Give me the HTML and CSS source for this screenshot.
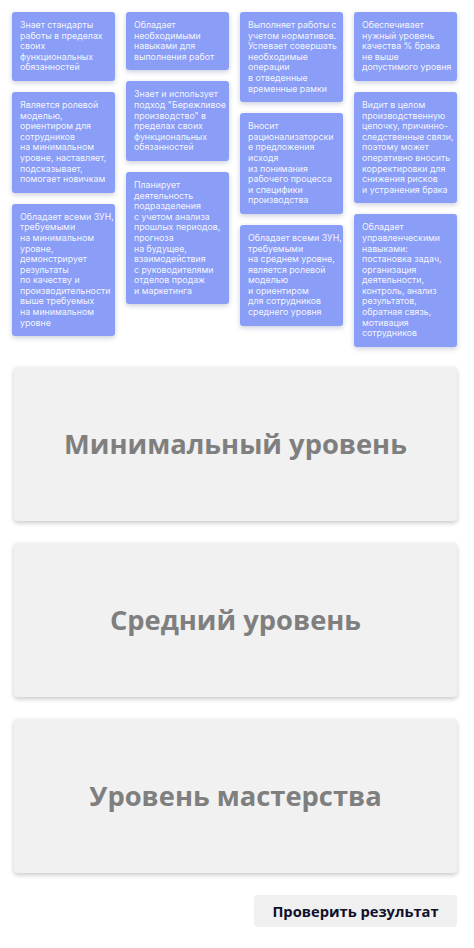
FILE: index.html
```html
<!DOCTYPE html>
<html lang="ru">
<head>
<meta charset="utf-8">
<title>Уровни</title>
<link rel="stylesheet" href="styles.css">
</head>
<body>
<div class="page">
  <div class="cards">
    <div class="col">
      <div class="card">Знает стандарты<br>работы в пределах<br>своих<br>функциональных<br>обязанностей</div>
      <div class="card">Является ролевой<br>моделью,<br>ориентиром для<br>сотрудников<br>на минимальном<br>уровне, наставляет,<br>подсказывает,<br>помогает новичкам</div>
      <div class="card">Обладает всеми ЗУН,<br>требуемыми<br>на минимальном<br>уровне,<br>демонстрирует<br>результаты<br>по качеству и<br>производительности<br>выше требуемых<br>на минимальном<br>уровне</div>
    </div>
    <div class="col">
      <div class="card">Обладает<br>необходимыми<br>навыками для<br>выполнения работ</div>
      <div class="card">Знает и использует<br>подход "Бережливое<br>производство" в<br>пределах своих<br>функциональных<br>обязанностей</div>
      <div class="card">Планирует<br>деятельность<br>подразделения<br>с учетом анализа<br>прошлых периодов,<br>прогноза<br>на будущее,<br>взаимодействия<br>с руководителями<br>отделов продаж<br>и маркетинга</div>
    </div>
    <div class="col">
      <div class="card">Выполняет работы с<br>учетом нормативов.<br>Успевает совершать<br>необходимые<br>операции<br>в отведенные<br>временные рамки</div>
      <div class="card">Вносит<br>рационализаторски<br>е предложения<br>исходя<br>из понимания<br>рабочего процесса<br>и специфики<br>производства</div>
      <div class="card">Обладает всеми ЗУН,<br>требуемыми<br>на среднем уровне,<br>является ролевой<br>моделью<br>и ориентиром<br>для сотрудников<br>среднего уровня</div>
    </div>
    <div class="col">
      <div class="card">Обеспечивает<br>нужный уровень<br>качества % брака<br>не выше<br>допустимого уровня</div>
      <div class="card">Видит в целом<br>производственную<br>цепочку, причинно-<br>следственные связи,<br>поэтому может<br>оперативно вносить<br>корректировки для<br>снижения рисков<br>и устранения брака</div>
      <div class="card">Обладает<br>управленческими<br>навыками:<br>постановка задач,<br>организация<br>деятельности,<br>контроль, анализ<br>результатов,<br>обратная связь,<br>мотивация<br>сотрудников</div>
    </div>
  </div>
  <div class="zones">
    <div class="zone">Минимальный уровень</div>
    <div class="zone">Средний уровень</div>
    <div class="zone">Уровень мастерства</div>
  </div>
  <div class="actions">
    <button class="check">Проверить результат</button>
  </div>
</div>
</body>
</html>
```

FILE: styles.css
```css
html, body {
  margin: 0;
  padding: 0;
  background: #ffffff;
}

.page {
  padding: 12px 17px 0 12px;
}

.cards {
  display: grid;
  grid-template-columns: repeat(4, 103px);
  column-gap: 11px;
  align-items: start;
}

.col {
  display: flex;
  flex-direction: column;
  gap: 11px;
}

.card {
  background: #8a9ef8;
  color: rgba(255, 255, 255, 0.92);
  font-family: Inter, "Noto Sans", sans-serif;
  font-size: 8.8px;
  line-height: 10.6px;
  padding: 8px 8px;
  border-radius: 3px;
  white-space: nowrap;
  box-shadow: 0 2px 5px rgba(60, 70, 120, 0.25);
}

.zones {
  margin: 20px 0 0 2px;
  display: flex;
  flex-direction: column;
  gap: 22px;
}

.zone {
  height: 154px;
  background: #f1f1f1;
  border-radius: 4px;
  box-shadow: 0 2px 5px rgba(0, 0, 0, 0.22);
  display: flex;
  align-items: center;
  justify-content: center;
  font-family: "Open Sans", "Noto Sans", sans-serif;
  font-weight: 700;
  font-size: 27.3px;
  color: #7f7f7f;
}

.actions {
  display: flex;
  justify-content: flex-end;
  margin-top: 22px;
}

.check {
  width: 203px;
  height: 32px;
  border: none;
  border-radius: 4px;
  background: #f0f0f0;
  font-family: "Open Sans", "Noto Sans", sans-serif;
  font-weight: 700;
  font-size: 14.7px;
  color: #10102a;
  padding: 0;
}
```
